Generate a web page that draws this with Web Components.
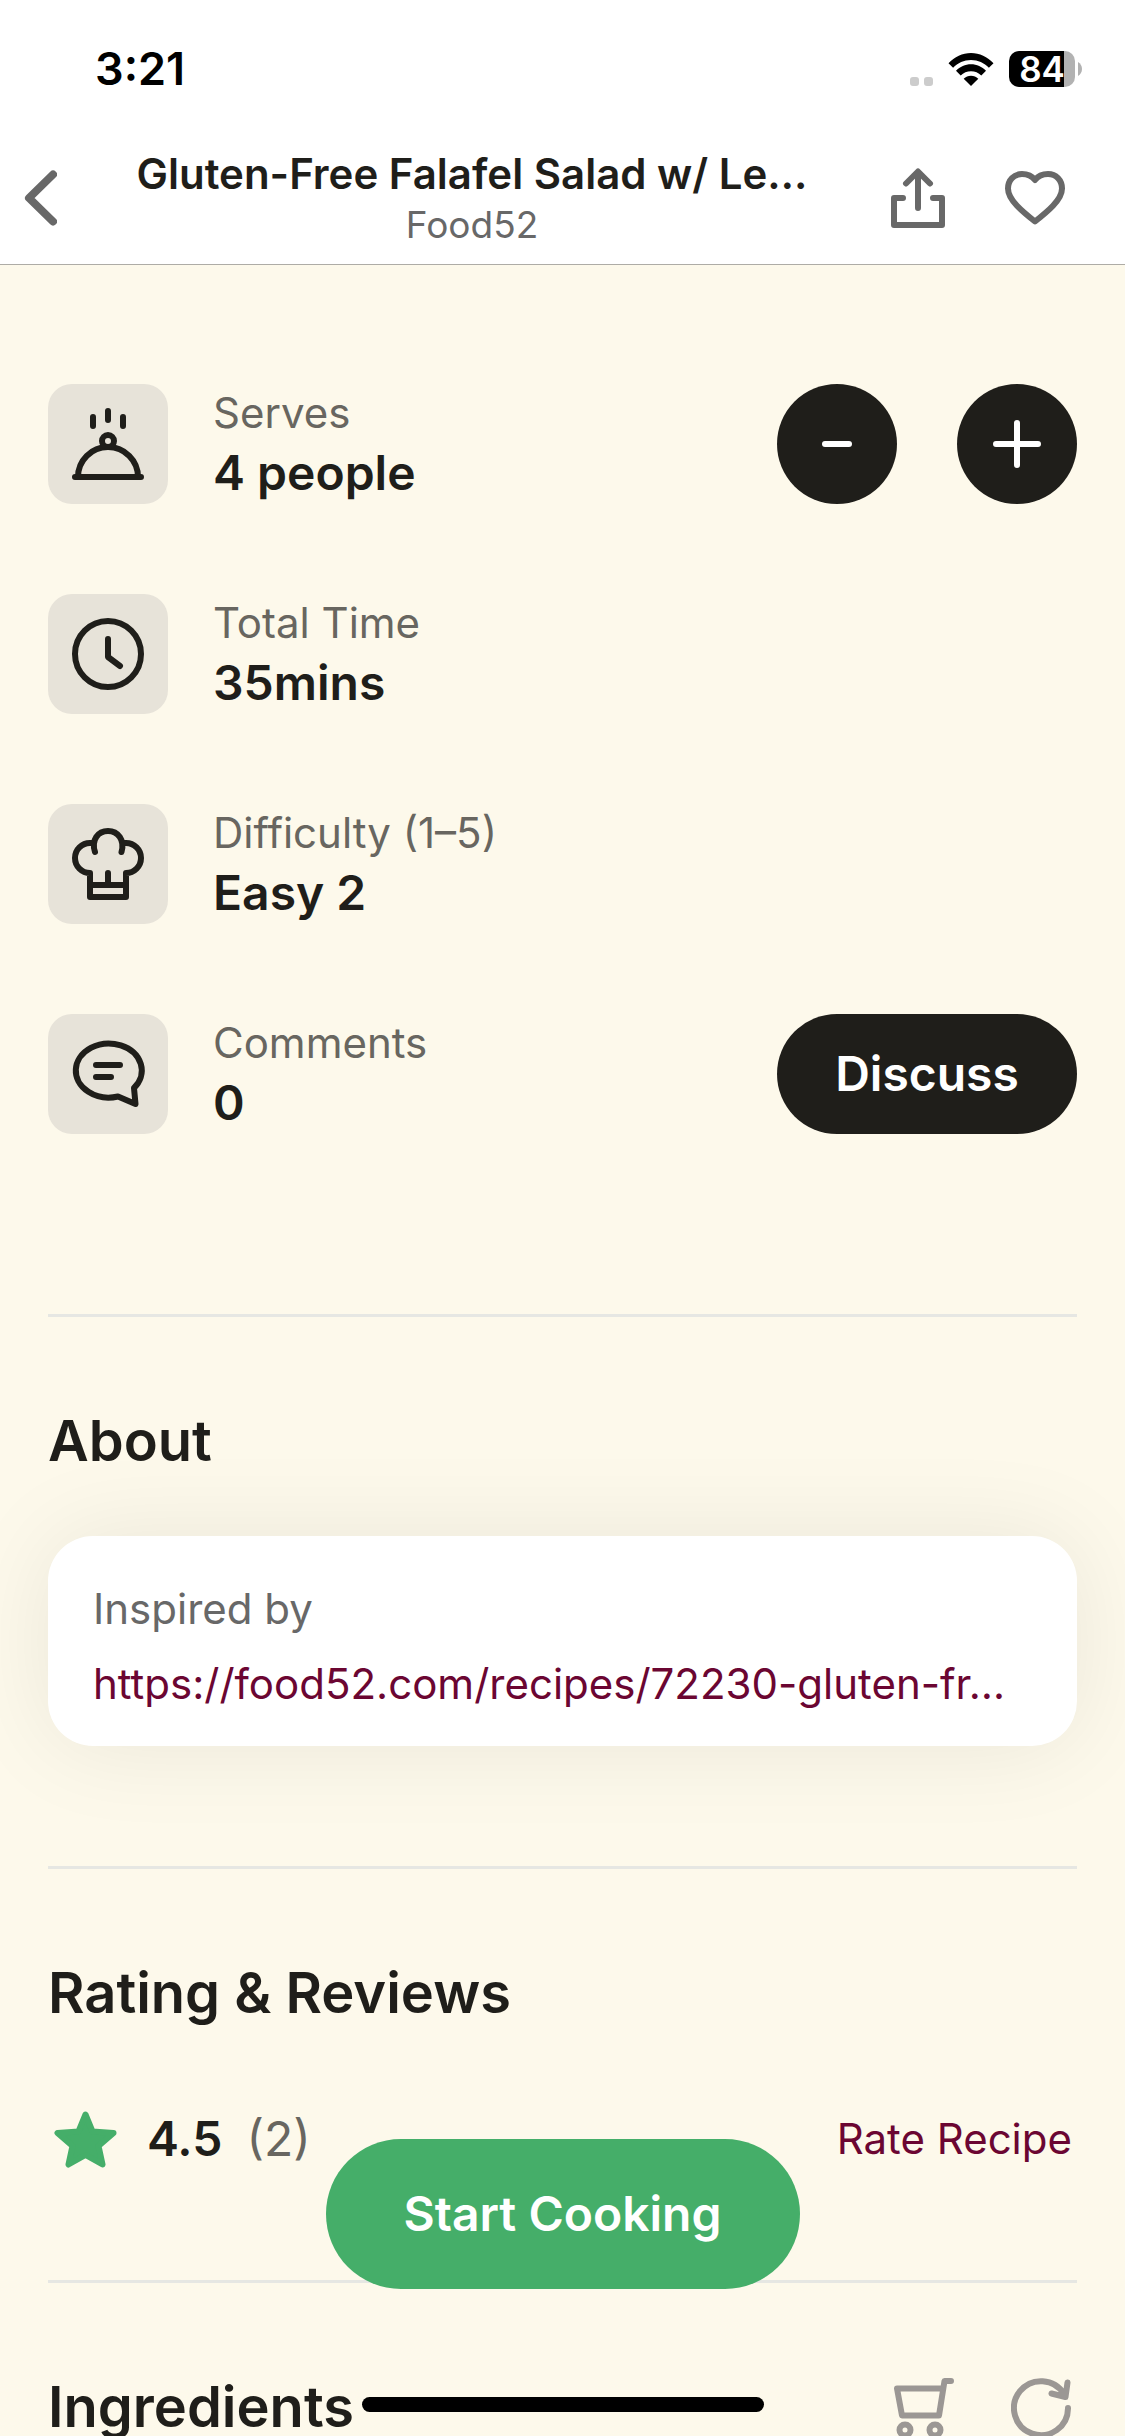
<!DOCTYPE html>
<html lang="en">
<head>
<meta charset="utf-8">
<meta name="viewport" content="width=device-width, initial-scale=1">
<title>Gluten-Free Falafel Salad</title>
<style>
  :root {
    --ink: #1f1e1a;
    --muted: #686660;
    --icon: #686868;
    --faint: #9b9794;
    --cream: #fdf9eb;
    --tile: #e7e3d9;
    --line: #e6e7e3;
    --wine: #6b0632;
    --green: #45ae69;
  }
  html, body { height: 100%; margin: 0; }
  body { font-family: Inter, "Liberation Sans", sans-serif; color: var(--ink); background: var(--cream); }
</style>
</head>
<body>
<recipe-app>
  <status-bar slot="top" time="3:21" battery="84"></status-bar>
  <recipe-header slot="top">
    <span>Gluten-Free Falafel Salad w/ Le…</span>
    <span slot="source">Food52</span>
  </recipe-header>

  <recipe-stats>
    <stat-row icon="serve" label="Serves" value="4 people">
      <round-button sign="minus" label="Fewer people"></round-button>
      <round-button sign="plus" label="More people"></round-button>
    </stat-row>
    <stat-row icon="clock" label="Total Time" value="35mins"></stat-row>
    <stat-row icon="hat" label="Difficulty (1–5)" value="Easy 2"></stat-row>
    <stat-row icon="chat" label="Comments" value="0">
      <pill-button>Discuss</pill-button>
    </stat-row>
  </recipe-stats>

  <page-section>
    <span slot="title">About</span>
    <source-card label="Inspired by" href="#source">https://food52.com/recipes/72230-gluten-fr…</source-card>
  </page-section>

  <page-section compact>
    <span slot="title">Rating &amp; Reviews</span>
    <rating-row score="4.5" count="(2)">Rate Recipe</rating-row>
  </page-section>

  <page-section>
    <span slot="title">Ingredients</span>
    <list-actions slot="tools"></list-actions>
  </page-section>

  <pill-button slot="dock" variant="primary">Start Cooking</pill-button>
</recipe-app>

<script>
const define = (name, render) => customElements.define(name, class extends HTMLElement {
  constructor() {
    super();
    this.attachShadow({ mode: "open" });
  }
  connectedCallback() {
    const t = document.createElement("template");
    t.innerHTML = `<style>:host,*{box-sizing:border-box}button{font:inherit;color:inherit;border:0;padding:0;margin:0;background:none;cursor:pointer}svg{display:block;fill:none;stroke:currentColor;stroke-width:6;stroke-linecap:round;stroke-linejoin:round}</style>` + render(this);
    this.shadowRoot.replaceChildren(t.content.cloneNode(true));
  }
});

define("recipe-app", () => `
  <style>
    :host { display: flex; flex-direction: column; height: 100vh; overflow: hidden; }
    header { flex: none; background: #fff; border-bottom: 1px solid #aeaca6; }
    main { flex: 1; min-height: 0; overflow-y: auto; scrollbar-width: none; padding: 119px 48px 0; background: var(--cream); }
    .dock { position: fixed; left: 0; right: 0; bottom: 24px; display: flex; flex-direction: column; align-items: center; gap: 108px; pointer-events: none; }
    .home { width: 402px; max-width: 60%; height: 15px; border-radius: 8px; background: #000; }
    ::slotted([slot=dock]) { pointer-events: auto; }
  </style>
  <header><slot name="top"></slot></header>
  <main><slot></slot></main>
  <div class="dock"><slot name="dock"></slot><div class="home"></div></div>`);

define("status-bar", el => `
  <style>
    :host { display: flex; justify-content: space-between; align-items: center; height: 132px; padding: 6px 43px 0 95px; color: #000; }
    time { font-size: 45px; font-weight: 600; line-height: 60px; }
    .right { display: flex; align-items: center; }
    .signal { margin-right: 15px; }
    .wifi { margin-right: 15px; }
    .signal, .wifi { stroke: none; fill: currentColor; }
    .battery { display: flex; align-items: center; justify-content: center; width: 66px; height: 36px; border-radius: 10px;
      background: linear-gradient(90deg, #000 55px, #b2b2b2 55px); color: #fff; font-size: 35px; font-weight: 600; line-height: 36px; }
    .nub { stroke: none; fill: #b2b2b2; margin-left: 3px; }
  </style>
  <time>${el.getAttribute("time")}</time>
  <div class="right">
    <svg class="signal" width="23" height="33" viewBox="0 0 23 33"><g fill="#ccc"><rect y="24" width="9" height="9" rx="3"/><rect x="14" y="24" width="9" height="9" rx="3"/></g></svg>
    <svg class="wifi" width="46" height="33" viewBox="0 0 46 33">
      <path d="M0.500 10.200C6.500 3.800 14.500 0 23 0s16.500 3.800 22.500 10.200L40.900 14.800C36.200 9.900 30 7 23 7S9.800 9.900 5.100 14.800Z"/>
      <path d="M8 17.800C12 13.600 17.200 11.200 23 11.200s11 2.400 15 6.600l-4.700 4.700C30.500 19.700 27 18.200 23 18.200s-7.500 1.500-10.300 4.300Z"/>
      <path d="M15.700 25.800C17.700 23.800 20.200 22.700 23 22.700s5.300 1.100 7.300 3.100L23 33Z"/>
    </svg>
    <div class="battery">${el.getAttribute("battery")}</div>
    <svg class="nub" width="4" height="14" viewBox="0 0 4 14"><path d="M0 0C2.500 1.500 4 4 4 7S2.500 12.500 0 14Z"/></svg>
  </div>`);

define("recipe-header", () => `
  <style>
    :host { display: flex; align-items: center; height: 132px; padding: 0 60px 0 24px; color: var(--icon); }
    .text { flex: 1; min-width: 0; text-align: center; padding-right: 4px; }
    h1 { margin: 0; font-size: 42px; font-weight: 600; line-height: 54px; color: var(--ink); white-space: nowrap; overflow: hidden; text-overflow: ellipsis; }
    p { margin: 0; font-size: 37px; line-height: 48px; }
    .actions { display: flex; gap: 60px; }
    button { display: flex; align-items: center; }
    .back { stroke-width: 8; }
  </style>
  <button aria-label="Back"><svg class="back" width="33" height="56" viewBox="0 0 33 56"><path d="M29 4.500L5 28 29 51.500"/></svg></button>
  <div class="text"><h1><slot></slot></h1><p><slot name="source"></slot></p></div>
  <div class="actions">
    <button aria-label="Share"><svg width="54" height="60" viewBox="0 0 54 60"><path d="M15 15.500L27 3.500 39 15.500M27 4V40M12 30H3V57H51V30H42"/></svg></button>
    <button aria-label="Save"><svg width="60" height="54" viewBox="0 0 60 54"><path d="M30 50.500C18 41 3 29 3 17.500 3 9 9 3 17 3 22.500 3 27 5 30 9 33 5 37.500 3 43 3 51 3 57 9 57 17.500 57 29 42 41 30 50.500Z"/></svg></button>
  </div>`);

define("recipe-stats", () => `
  <style>:host { display: flex; flex-direction: column; gap: 90px; padding-bottom: 180px; }</style>
  <slot></slot>`);

const glyphs = {
  serve: `<path d="M27 93H93M30 93A30 30 0 0 1 90 93M45 33V42M60 27V36M75 33V42"/><circle cx="60" cy="57" r="6"/>`,
  clock: `<circle cx="60" cy="60" r="33"/><path d="M60 45V63L72 72"/>`,
  hat: `<path d="M47 48C43 36 50 27 60 27S77 36 73.500 48M45 39H42A15 15 0 0 0 42 69V93H78V69A15 15 0 0 0 78 39H75M42 81H78M60 69V81"/>`,
  chat: `<path d="M86 74A33 27 0 1 0 70 82.500L87.500 90ZM48 51H72M48 63H63"/>`
};

define("stat-row", el => `
  <style>
    :host { display: flex; align-items: center; gap: 45px; height: 120px; }
    .tile { flex: none; width: 120px; height: 120px; border-radius: 24px; background: var(--tile); }
    dl { flex: 1; margin: 0; padding-bottom: 3px; }
    dt { font-size: 42px; line-height: 60px; color: var(--muted); }
    dd { margin: 0; font-size: 48px; line-height: 60px; font-weight: 600; }
    .side { display: flex; gap: 60px; }
  </style>
  <div class="tile"><svg width="120" height="120" viewBox="0 0 120 120">${glyphs[el.getAttribute("icon")]}</svg></div>
  <dl><dt>${el.getAttribute("label")}</dt><dd>${el.getAttribute("value")}</dd></dl>
  <div class="side"><slot></slot></div>`);

define("round-button", el => `
  <style>
    :host { display: block; }
    button { display: flex; align-items: center; justify-content: center; width: 120px; height: 120px; border-radius: 50%; background: var(--ink); color: #fff; }
  </style>
  <button aria-label="${el.getAttribute("label")}"><svg width="48" height="48" viewBox="0 0 48 48"><path d="${el.getAttribute("sign") === "plus" ? "M3 24H45M24 3V45" : "M12 24H36"}"/></svg></button>`);

define("pill-button", () => `
  <style>
    :host { display: block; }
    button { min-width: 300px; height: 120px; padding: 0 54px; border-radius: 75px; background: var(--ink); color: #fff; font-size: 48px; font-weight: 600; line-height: 60px; }
    :host([variant=primary]) button { min-width: 474px; height: 150px; background: var(--green); }
  </style>
  <button><slot></slot></button>`);

define("page-section", () => `
  <style>
    :host { display: block; border-top: 3px solid var(--line); padding: 90px 0 120px; }
    :host([compact]) { padding-bottom: 90px; }
    .head { display: flex; justify-content: space-between; align-items: center; margin-bottom: 60px; }
    h2 { margin: 0; font-size: 56px; line-height: 69px; font-weight: 600; }
  </style>
  <div class="head"><h2><slot name="title"></slot></h2><slot name="tools"></slot></div>
  <slot></slot>`);

define("source-card", el => `
  <style>
    :host { display: flex; flex-direction: column; gap: 15px; padding: 43px 60px 32px 45px; border-radius: 45px; background: #fff; box-shadow: 0 0 96px rgba(31, 30, 26, .08); font-size: 42px; line-height: 60px; }
    span { color: var(--icon); }
    a { color: var(--wine); text-decoration: none; white-space: nowrap; overflow: hidden; text-overflow: ellipsis; }
  </style>
  <span>${el.getAttribute("label")}</span>
  <a href="${el.getAttribute("href")}"><slot></slot></a>`);

define("rating-row", el => `
  <style>
    :host { display: flex; align-items: center; height: 102px; padding: 0 5px 0 6px; font-size: 48px; line-height: 60px; }
    svg { color: var(--green); fill: currentColor; margin-right: 30px; }
    b { font-weight: 600; margin-right: 24px; }
    span { color: var(--muted); }
    a { margin-left: auto; font-size: 42px; color: var(--wine); text-decoration: none; }
  </style>
  <svg width="63" height="57" viewBox="0 0 63 57" aria-hidden="true"><path d="M31.500 3.500L38.500 20.500 59.500 22 44.500 35 48.500 53.500 31.500 44 14.500 53.500 18.500 35 3.500 22 24.500 20.500Z"/></svg>
  <b>${el.getAttribute("score")}</b><span>${el.getAttribute("count")}</span>
  <a href="#rate"><slot></slot></a>`);

define("list-actions", () => `
  <style>
    :host { display: flex; gap: 57px; padding-right: 6px; color: var(--faint); }
  </style>
  <button aria-label="Add to cart"><svg width="60" height="60" viewBox="0 0 60 60"><path d="M48 10.500H3L8 37.500H45L50.500 3H57"/><circle cx="11" cy="52" r="5.500"/><circle cx="41" cy="52" r="5.500"/></svg></button>
  <button aria-label="Refresh"><svg width="60" height="60" viewBox="0 0 60 60"><path d="M57 30A27 27 0 1 1 53 16M56.500 4.500L54.500 19 40.500 15.500"/></svg></button>`);
</script>
</body>
</html>
